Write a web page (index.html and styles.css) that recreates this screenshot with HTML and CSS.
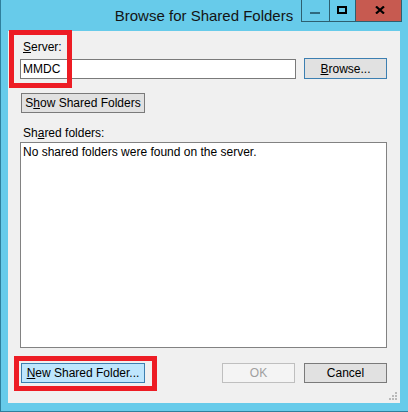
FILE: index.html
```html
<!DOCTYPE html>
<html>
<head>
<meta charset="utf-8">
<link rel="stylesheet" href="styles.css">
</head>
<body>
<div class="window">
  <div class="titlebar">
    <div class="title">Browse for Shared Folders</div>
    <div class="caption">
      <div class="cap cap-min"><svg width="10" height="2" viewBox="0 0 10 2"><rect width="10" height="2" fill="#2f6a7f"/></svg></div>
      <div class="cap cap-max"><svg width="10" height="8" viewBox="0 0 10 8"><rect x="1" y="1" width="8" height="6" fill="none" stroke="#000" stroke-width="2"/></svg></div>
      <div class="cap cap-close"><svg width="10" height="8" viewBox="0 0 10 8"><path d="M1 0.5 L9 7.5 M9 0.5 L1 7.5" stroke="#000" stroke-width="2.2" fill="none"/></svg></div>
    </div>
  </div>
  <div class="client">
    <div class="label lbl-server"><u>S</u>erver:</div>
    <div class="row-server">
      <div class="input">MMDC</div>
      <div class="btn btn-browse"><span><u>B</u>rowse...</span></div>
    </div>
    <div class="row-show">
      <div class="btn btn-show"><span>S<u>h</u>ow Shared Folders</span></div>
    </div>
    <div class="label lbl-shared">Sh<u>a</u>red folders:</div>
    <div class="list">No shared folders were found on the server.</div>
    <div class="row-bottom">
      <div class="btn btn-new"><span><u>N</u>ew Shared Folder...</span></div>
      <div class="spacer"></div>
      <div class="btn btn-ok"><span>OK</span></div>
      <div class="btn btn-cancel"><span>Cancel</span></div>
    </div>
    <svg class="grip" width="10" height="10" viewBox="0 0 10 10">
      <rect x="7" y="1" width="2" height="2" fill="#b9b9b9"/>
      <rect x="4" y="4" width="2" height="2" fill="#b9b9b9"/>
      <rect x="7" y="4" width="2" height="2" fill="#b9b9b9"/>
      <rect x="1" y="7" width="2" height="2" fill="#b9b9b9"/>
      <rect x="4" y="7" width="2" height="2" fill="#b9b9b9"/>
      <rect x="7" y="7" width="2" height="2" fill="#b9b9b9"/>
    </svg>
  </div>
  <div class="mark mark-server"></div>
  <div class="mark mark-new"></div>
</div>
</body>
</html>
```

FILE: styles.css
```css
* { box-sizing: border-box; }
html, body { margin: 0; padding: 0; }
body {
  width: 408px;
  height: 412px;
  overflow: hidden;
  font-family: "Liberation Sans", Arial, sans-serif;
  font-size: 12px;
  color: #000;
}
.window {
  position: relative;
  width: 408px;
  height: 412px;
  background: #67cbea;
  border-left: 1px solid #2f7f9c;
  border-bottom: 1px solid #2f7f9c;
  display: flex;
  flex-direction: column;
}
.titlebar {
  height: 31px;
  flex: none;
  display: flex;
  align-items: center;
  justify-content: center;
}
.title {
  font-size: 15px;
  color: #141414;
  margin-left: -1px;
  margin-top: 0px;
}
.caption {
  position: absolute;
  top: 0;
  right: 6px;
  display: flex;
  height: 22px;
  border-left: 1px solid #2d5f70;
  border-bottom: 1px solid #2d5f70;
}
.cap {
  display: flex;
  align-items: center;
  justify-content: center;
  border-right: 1px solid #2d5f70;
  height: 21px;
}
.cap-min { width: 28px; padding-top: 4px; padding-right: 1px; }
.cap-max { width: 26px; padding-right: 2px; padding-bottom: 2px; }
.cap-close { width: 46px; background: #c75a50; padding-left: 2px; padding-bottom: 2px; }
.client {
  position: relative;
  margin-left: 7px;
  width: 392px;
  height: 372px;
  background: #f0f0f0;
  padding: 9px 13px 0 12px;
  display: flex;
  flex-direction: column;
}
.label { line-height: 15px; height: 15px; }
.lbl-server { margin-left: 3px; }
.row-server {
  margin-top: 3px;
  display: flex;
  align-items: flex-end;
  gap: 8px;
  height: 21px;
}
.input {
  width: 276px;
  height: 20px;
  background: #fff;
  border: 1px solid #7a7a7a;
  padding: 0 2px;
  line-height: 18px;
}
.btn {
  display: flex;
  align-items: center;
  justify-content: center;
  height: 20px;
  background: #e1e1e1;
  border: 1px solid #7a7a7a;
  line-height: 14px;
}
.btn-browse { width: 83px; height: 21px; border-color: #3c7fb1; }
.row-show { margin-top: 14px; display: flex; }
.btn-show { width: 124px; margin-left: 1px; }
.lbl-shared { margin-top: 12px; margin-left: 3px; height: 16px; line-height: 16px; }
.list {
  margin-top: 1px;
  height: 206px;
  background: #fff;
  border: 1px solid #828282;
  padding: 1px 2px;
  line-height: 16px;
}
.row-bottom {
  margin-top: 15px;
  display: flex;
  align-items: center;
}
.btn-new { width: 124px; margin-left: 1px; background: #bee6fd; border-color: #3c7fb1; }
.spacer { flex: 1; }
.btn-ok { width: 73px; background: #f4f4f4; border-color: #bfbfbf; color: #a0a0a0; }
.btn-cancel { width: 83px; margin-left: 9px; }
.grip {
  position: absolute;
  right: 2px;
  bottom: 2px;
}
.mark {
  position: absolute;
  border: 5px solid #ed1c24;
}
.mark-server { left: 8px; top: 30px; width: 63px; height: 58px; }
.mark-new { left: 13px; top: 356px; width: 143px; height: 35px; }
```
